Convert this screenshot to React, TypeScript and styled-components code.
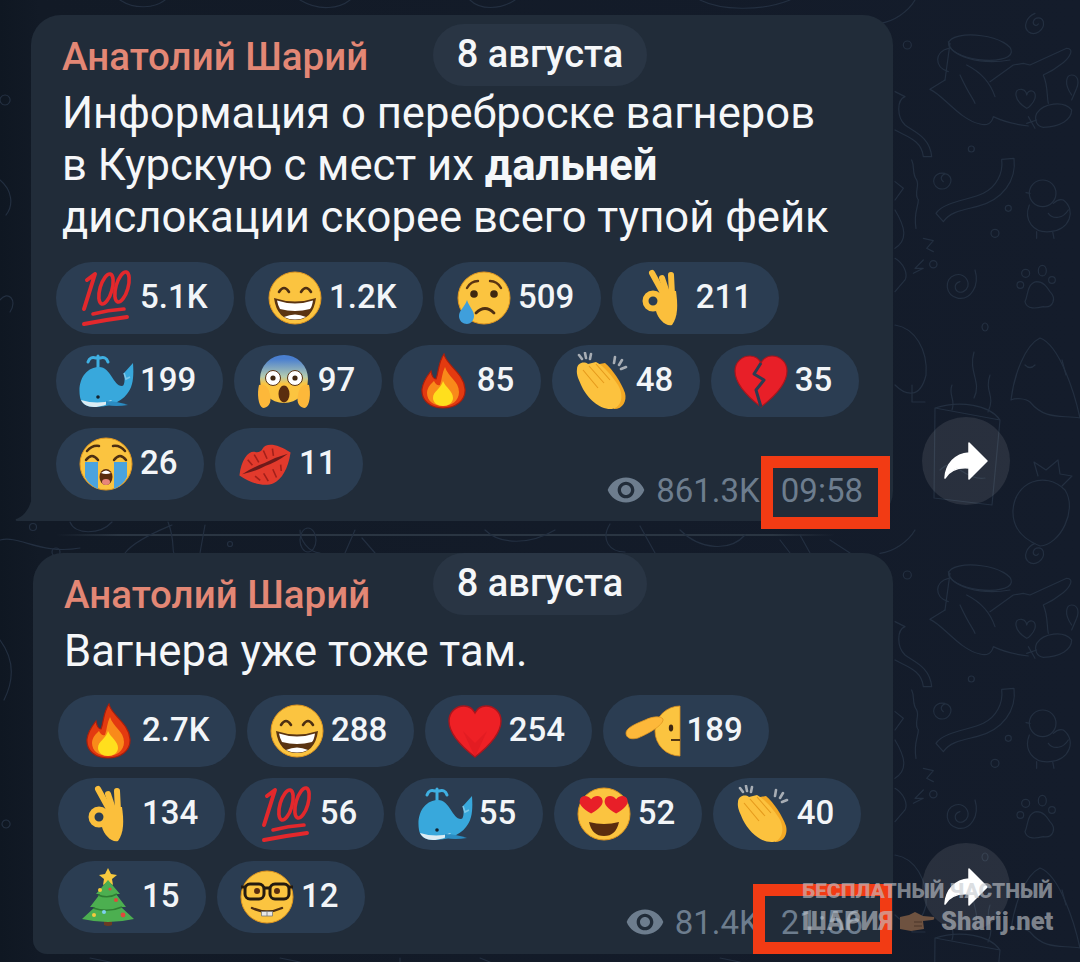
import * as React from 'react'
import styled, { createGlobalStyle } from 'styled-components'

const GlobalStyle = createGlobalStyle`
  html, body {
    margin: 0;
    padding: 0;
    background: #141c2a;
  }
  body {
    font-family: Roboto, "Liberation Sans", sans-serif;
  }
`

const Page = styled.div`
  position: relative;
  width: 1080px;
  height: 962px;
  overflow: hidden;
  padding-top: 15px;
  box-sizing: border-box;
  background: linear-gradient(90deg, #0f1722 0, #121a26 40px, #141c2b 100%);
`
const Doodles = styled.svg`
  position: absolute;
  left: 0;
  top: 0;
  fill: none;
  stroke: #232f40;
  stroke-width: 1.2;
  stroke-linecap: round;
  stroke-linejoin: round;
`
const MessageRow = styled.div<{ $left: number }>`
  position: relative;
  display: flex;
  align-items: flex-end;
  padding-left: ${p => p.$left}px;
`
const Bubble = styled.div<{ $width: number; $tail?: boolean }>`
  position: relative;
  box-sizing: border-box;
  width: ${p => p.$width}px;
  padding: 20px 25px 21px 25px;
  background: #212c39;
  border-radius: 30px 30px 30px ${p => (p.$tail ? '0' : '14px')};
`
const Tail = styled.svg`
  position: absolute;
  left: -16px;
  bottom: 0;
  fill: #212c39;
`
const Name = styled.div`
  margin-left: 6px;
  font-size: 38.5px;
  line-height: 44px;
  font-weight: 500;
  color: #e38775;
`
const MessageText = styled.div`
  margin: 9px 0 0 6px;
  font-size: 43.6px;
  line-height: 52px;
  color: #f5f7f9;
  white-space: nowrap;
  b {
    font-weight: 700;
  }
`
const DatePill = styled.div<{ $left: number; $top: number }>`
  position: absolute;
  left: ${p => p.$left}px;
  top: ${p => p.$top}px;
  width: 214px;
  height: 62px;
  padding-bottom: 2px;
  box-sizing: border-box;
  border-radius: 31px;
  background: #293544;
  display: flex;
  align-items: center;
  justify-content: center;
  font-size: 38px;
  font-weight: 500;
  color: #f5f7f9;
`
const Reactions = styled.div<{ $top: number }>`
  display: flex;
  flex-wrap: wrap;
  gap: 11px;
  max-width: 808px;
  margin-top: ${p => p.$top}px;
`
const ReactionPill = styled.div`
  display: flex;
  align-items: center;
  height: 72px;
  padding: 0 26.5px 0 22px;
  border-radius: 36px;
  background: #2b3d52;
  font-size: 33px;
  font-weight: 500;
  color: #f2f5f8;
  svg {
    margin-right: 6px;
    flex: none;
  }
`
const Count = styled.span`
  margin-bottom: 4px;
`
const Meta = styled.div<{ $bottom: number }>`
  position: absolute;
  right: 30px;
  bottom: ${p => p.$bottom}px;
  display: flex;
  align-items: center;
  height: 40px;
  font-size: 33px;
  color: #6d7d8e;
`
const Views = styled.span`
  display: flex;
  align-items: center;
  gap: 10px;
  margin-right: 21px;
  svg {
    fill: #6d7d8e;
  }
`
const Highlight = styled.div<{ $left: number; $top: number; $w: number; $h: number }>`
  position: absolute;
  left: ${p => p.$left}px;
  top: ${p => p.$top}px;
  width: ${p => p.$w}px;
  height: ${p => p.$h}px;
  box-sizing: border-box;
  border: 12px solid #f23b14;
`
const ShareButton = styled.div<{ $gap: number; $bottom: number }>`
  width: 88px;
  height: 88px;
  margin-left: ${p => p.$gap}px;
  margin-bottom: ${p => p.$bottom}px;
  border-radius: 50%;
  background: rgba(255, 255, 255, 0.09);
  display: flex;
  align-items: center;
  justify-content: center;
`
const Divider = styled.div`
  height: 2px;
  margin: 13px 245px 17px 56px;
  background: linear-gradient(90deg, transparent, #2a3542 8%, #2a3542 92%, transparent);
`
const Watermark = styled.div`
  position: absolute;
  left: 802px;
  top: 878px;
  width: 270px;
  font-weight: 900;
  color: rgba(196, 200, 206, 0.6);
  white-space: nowrap;
`
const WatermarkTop = styled.div`
  font-size: 21px;
  line-height: 27px;
`
const WatermarkBottom = styled.div`
  display: flex;
  align-items: center;
  gap: 6px;
  font-size: 25.5px;
  line-height: 32px;
`

const Hundred = () => (
  <svg width="56" height="58" viewBox="0 0 56 58" fill="none" stroke="#e3282c" strokeLinecap="round">
    <path d="M6 40 L17 5 L9 11" strokeWidth="4" strokeLinejoin="round" />
    <ellipse cx="28" cy="20" rx="6" ry="15.5" transform="rotate(16 28 20)" strokeWidth="3.6" />
    <ellipse cx="44" cy="18" rx="6" ry="15.5" transform="rotate(16 44 18)" strokeWidth="3.6" />
    <path d="M15 45 Q30 41 46 40" strokeWidth="3.6" />
    <path d="M6 55 Q26 51 49 48" strokeWidth="4" />
  </svg>
)

const Face = () => <circle cx="28" cy="28" r="26" fill="#fbc440" stroke="#e0961f" strokeWidth="1" />

const Grin = () => (
  <svg width="56" height="56" viewBox="0 0 56 56">
    <Face />
    <path d="M12 22 q5 -8 10 0 M34 22 q5 -8 10 0" fill="none" stroke="#4d2f12" strokeWidth="2.6" strokeLinecap="round" />
    <path d="M7 28 Q28 35 49 28 Q46 50 28 50 Q10 50 7 28Z" fill="#5a3412" />
    <path d="M10 30.5 Q28 36.5 46 30.5 Q45 37 43 39 Q28 43 13 39 Q11 36 10 30.5Z" fill="#fff" />
    <path d="M17 47 Q28 42 39 47 Q34 49.5 28 49.5 Q22 49.5 17 47Z" fill="#fff" />
  </svg>
)

const SadTear = () => (
  <svg width="56" height="56" viewBox="0 0 56 56">
    <Face />
    <path d="M11 18 Q15 11 22 11 M34 11 Q41 11 45 18" fill="none" stroke="#5a3412" strokeWidth="2.4" strokeLinecap="round" />
    <circle cx="18" cy="24" r="3.8" fill="#3f2710" />
    <circle cx="38" cy="24" r="3.8" fill="#3f2710" />
    <path d="M20 43 Q29 34 38 43" fill="none" stroke="#4d2f12" strokeWidth="2.8" strokeLinecap="round" />
    <path d="M11 30 C13 37 18 40 18 46 C18 51 14 54 11 54 C7 54 3 51 3 46 C3 40 9 37 11 30Z" fill="#3f9fdc" />
  </svg>
)

const OkHand = () => (
  <svg width="56" height="58" viewBox="0 0 56 58">
    <g fill="none" stroke="#fbbf3c" strokeLinecap="round">
      <circle cx="19" cy="32" r="7.5" strokeWidth="6" />
      <path d="M18 4 L29 24" strokeWidth="6" />
      <path d="M28 9 L33 24" strokeWidth="6" />
      <path d="M37 6 L38 26" strokeWidth="6" />
    </g>
    <path d="M26 22 L42 22 C44 36 44 48 38 56 C32 58 24 50 22 42Z" fill="#fbbf3c" />
    <circle cx="19" cy="32" r="3.6" fill="#2b3d52" />
  </svg>
)

const Whale = () => (
  <svg width="56" height="56" viewBox="0 0 56 56">
    <path d="M20 3 L20 14 M10 9 Q12 3 18 5 M22 5 Q28 3 30 9" fill="none" stroke="#3fb0e2" strokeWidth="3" strokeLinecap="round" />
    <path d="M2 44 C-1 26 9 14 21 14 C33 14 35 33 44 33 C47 33 47 24 46 20 L55 10 C56 24 55 34 49 41 C42 50 30 54 16 54 C8 54 3 50 2 44Z" fill="#38a8dc" />
    <path d="M3 47 Q20 52 34 47 C30 52 22 54 16 54 C9 54 5 51 3 47Z" fill="#dcecf3" />
    <path d="M28 48 Q38 48 50 52 Q38 54 28 52Z" fill="#2b8cc2" />
    <circle cx="20" cy="44" r="1.8" fill="#14222e" />
    <path d="M46 20 L48 26 L52 24" fill="none" stroke="#7cc9ea" strokeWidth="1.6" />
  </svg>
)

const Scream = () => (
  <svg width="56" height="56" viewBox="0 0 56 56">
    <defs>
      <linearGradient id="screamFace" x1="0" y1="0" x2="0" y2="1">
        <stop offset="0.08" stopColor="#4a7fd0" />
        <stop offset="0.45" stopColor="#b3cbb0" />
        <stop offset="0.6" stopColor="#fbc440" />
      </linearGradient>
    </defs>
    <circle cx="28" cy="26" r="24" fill="url(#screamFace)" />
    <circle cx="17" cy="25" r="7.5" fill="#fff" stroke="#5a3412" strokeWidth="1" />
    <circle cx="39" cy="25" r="7.5" fill="#fff" stroke="#5a3412" strokeWidth="1" />
    <circle cx="17" cy="25" r="2.6" fill="#3f2710" />
    <circle cx="39" cy="25" r="2.6" fill="#3f2710" />
    <ellipse cx="28" cy="41" rx="5.5" ry="8.5" fill="#5a2d0f" />
    <path d="M3 32 C8 30 13 34 14 42 C16 50 12 55 7 55 C2 53 1 40 3 32Z" fill="#fdb83a" />
    <path d="M53 32 C48 30 43 34 42 42 C40 50 44 55 49 55 C54 53 55 40 53 32Z" fill="#fdb83a" />
  </svg>
)

const Fire = () => (
  <svg width="56" height="56" viewBox="0 0 56 56">
    <path d="M29 1 C31 12 49 20 50 36 C51 48 40 55 28 55 C16 55 6 48 7 36 C8 28 13 22 16 18 C17 24 19 26 21 26 C24 18 23 10 29 1Z" fill="#e33a10" stroke="#a81e0c" strokeWidth="1.2" />
    <path d="M30 14 C33 24 44 28 44 39 C44 48 36 53 28 53 C19 53 12 48 12 40 C12 34 17 30 19 28 C21 32 23 33 25 32 C27 26 27 20 30 14Z" fill="#f98a1a" />
    <path d="M28 28 C31 35 38 38 38 45 C38 50 33 53 28 53 C23 53 18 50 18 45 C18 38 26 36 28 28Z" fill="#ffdf1d" />
  </svg>
)

const Clap = () => (
  <svg width="56" height="58" viewBox="0 0 56 58">
    <path d="M11 1 L12 6 M5 3 L8 7 M17 2 L16 7 M41 5 L40 11 M48 8 L45 13 M52 15 L47 17" stroke="#a7adb4" strokeWidth="2.6" strokeLinecap="round" />
    <path d="M20 13 L31 11 C39 18 47 30 51 41 C53 49 49 57 40 57Z" fill="#f3a925" />
    <path d="M3 17 C3 11 10 9 14 12 L22 10 C30 14 38 24 44 33 C50 43 48 55 38 57 C26 58 14 47 8 35 C5 28 2 23 3 17Z" fill="#fcc23e" />
    <path d="M9 18 L24 36 M15 14 L30 31 M22 12 L36 28" stroke="#e59a1c" strokeWidth="1.1" fill="none" />
  </svg>
)

const heartPath = 'M28 54 C10 40 2 29 2 18 C2 9 9 3 17 3 C22 3 26 6 28 10 C30 6 34 3 39 3 C47 3 54 9 54 18 C54 29 46 40 28 54Z'

const BrokenHeart = () => (
  <svg width="56" height="56" viewBox="0 0 56 56">
    <path d={heartPath} fill="#e81f28" stroke="#a8161d" strokeWidth="1.2" />
    <path d="M28 10 L21 21 L31 27 L23 37 L28 54" fill="none" stroke="#2b3d52" strokeWidth="3" strokeLinejoin="round" />
  </svg>
)

const Heart = () => (
  <svg width="56" height="56" viewBox="0 0 56 56">
    <path d={heartPath} fill="#ee2025" stroke="#a8161d" strokeWidth="1.4" />
    <path d="M28 40 L40 28 L28 54 L16 28Z" fill="#d8181f" opacity="0.5" />
  </svg>
)

const LoudCry = () => (
  <svg width="56" height="56" viewBox="0 0 56 56">
    <Face />
    <path d="M7 26 L20 26 L20 53 Q11 49 7 41Z M36 26 L49 26 L49 41 Q45 49 36 53Z" fill="#4aa3df" />
    <path d="M8 24 q6 -8 12 0 M36 24 q6 -8 12 0 M9 15 Q14 9 21 10 M35 10 Q42 9 47 15" fill="none" stroke="#4d2f12" strokeWidth="2.5" strokeLinecap="round" />
    <ellipse cx="28" cy="41" rx="6.5" ry="8" fill="#5a2d0f" />
    <path d="M23 37 Q28 32 33 37 Q28 39 23 37Z" fill="#fff" />
    <ellipse cx="28" cy="46" rx="4" ry="3" fill="#e8857a" />
  </svg>
)

const Lips = () => (
  <svg width="56" height="56" viewBox="0 0 56 56">
    <g transform="rotate(-24 28 28)">
      <path d="M0 28 C9 13 19 9 24 13 C26 15 30 15 32 13 C37 9 47 13 56 28 C47 42 37 49 28 49 C19 49 9 42 0 28Z" fill="#e23a2c" />
      <path d="M3 28 Q16 26 28 27 Q40 26 53 28 Q40 31 28 30 Q16 31 3 28Z" fill="#6d1a1a" />
      <path d="M14 17 L16 24 M22 15 L23 24 M32 15 L32 24 M41 17 L39 24 M14 35 L17 41 M23 36 L24 45 M33 36 L33 45 M42 35 L40 41" stroke="#a3201a" strokeWidth="1.6" />
    </g>
  </svg>
)

const Salute = () => (
  <svg width="56" height="56" viewBox="0 0 56 56">
    <path d="M55 3 A25 25 0 0 0 55 53Z" fill="#fbc440" stroke="#d98e1f" strokeWidth="0.8" />
    <ellipse cx="46" cy="25" rx="2.2" ry="3.4" fill="#3f2710" />
    <path d="M46 37 H55" stroke="#3f2710" strokeWidth="1.8" />
    <path d="M1 30 C1 25 10 21 20 17 C28 13 36 13 38 16 C39 21 27 29 13 35 C6 37 1 35 1 30Z" fill="#fdb83a" stroke="#e0961f" strokeWidth="0.8" />
  </svg>
)

const Tree = () => (
  <svg width="56" height="60" viewBox="0 0 56 60">
    <path d="M28 1 L31 7 L37 8 L32 12 L33 18 L28 15 L23 18 L24 12 L19 8 L25 7Z" fill="#f7c93e" />
    <path d="M24 52 H32 V58 Q28 60 24 58Z" fill="#6b3b22" />
    <path d="M28 13 L40 27 L36 27 L46 40 L41 40 L54 52 Q28 58 2 52 L15 40 L10 40 L20 27 L16 27Z" fill="#4caf50" />
    <path d="M18 28 Q28 32 37 27 M13 41 Q28 46 42 40" fill="none" stroke="#2e7d32" strokeWidth="1.6" />
    <circle cx="20" cy="23" r="2" fill="#f7c93e" />
    <circle cx="36" cy="33" r="2" fill="#e0483c" />
    <circle cx="14" cy="48" r="2" fill="#f7c93e" />
    <circle cx="24" cy="45" r="2" fill="#7fd0f0" />
    <circle cx="43" cy="48" r="2.4" fill="#e0483c" />
    <circle cx="30" cy="22" r="1.6" fill="#e0483c" />
  </svg>
)

const Nerd = () => (
  <svg width="56" height="56" viewBox="0 0 56 56">
    <Face />
    <circle cx="18" cy="22" r="3" fill="#5a2d0f" />
    <circle cx="38" cy="22" r="3" fill="#5a2d0f" />
    <g fill="none" stroke="#241a10" strokeWidth="3">
      <rect x="6" y="15" width="19" height="15" rx="5" />
      <rect x="31" y="15" width="19" height="15" rx="5" />
      <path d="M25 19 H31 M2 18 H6 M50 18 H54" />
    </g>
    <path d="M13 39 Q28 46 43 39" fill="none" stroke="#4d2f12" strokeWidth="2.4" strokeLinecap="round" />
    <path d="M22.5 42.5 H33.5 V47 H22.5Z" fill="#e8e8e8" stroke="#777" strokeWidth="0.8" />
    <path d="M28 42.5 V47" stroke="#777" strokeWidth="0.8" />
  </svg>
)

const HeartEyes = () => (
  <svg width="56" height="56" viewBox="0 0 56 56">
    <Face />
    <path d="M17 31 C8 26 4 21 5 17 C6 12 13 11 17 16 C21 11 28 12 29 17 C30 21 26 26 17 31Z" fill="#e81f28" transform="translate(-1 -2) scale(0.95)" />
    <path d="M17 31 C8 26 4 21 5 17 C6 12 13 11 17 16 C21 11 28 12 29 17 C30 21 26 26 17 31Z" fill="#e81f28" transform="translate(24 -2) scale(0.95)" />
    <path d="M13 36 Q28 40 43 36 Q40 50 28 50 Q16 50 13 36Z" fill="#5a2d0f" />
  </svg>
)

const Eye = () => (
  <svg width="40" height="40" viewBox="0 0 24 24">
    <path d="M12 4.5C7 4.5 2.73 7.61 1 12c1.73 4.39 6 7.5 11 7.5s9.27-3.11 11-7.5c-1.73-4.39-6-7.5-11-7.5zM12 17c-2.76 0-5-2.24-5-5s2.24-5 5-5 5 2.24 5 5-2.24 5-5 5zm0-8c-1.66 0-3 1.34-3 3s1.34 3 3 3 3-1.34 3-3-1.34-3-3-3z" />
  </svg>
)

const ShareArrow = () => (
  <svg width="46" height="40" viewBox="0 0 46 40">
    <path d="M26 2 L44 20 L26 38 L26 27 C15 26 7 29 2 37 C3 23 12 13 26 12Z" fill="#fff" stroke="#fff" strokeWidth="1.5" strokeLinejoin="round" />
  </svg>
)

const PointingHand = () => (
  <svg width="36" height="24" viewBox="0 0 36 24">
    <path d="M1 8 L10 6 L16 3 L24 7 L35 8 Q36 11 33 11 L24 12 L25 20 L12 22 L1 20Z" fill="#6e5240" />
    <path d="M15 13 L23 13 M15 17 L23 17" stroke="#4a3528" strokeWidth="1" />
  </svg>
)

const TileDoodles = () => (
  <>
    <g transform="translate(880 0) scale(0.3333)" strokeWidth="3.6">
      <path d="M465 40 C440 50 428 80 445 95 C465 110 495 90 490 65 C485 50 465 50 460 65 C458 75 470 80 475 72" />
      <ellipse cx="300" cy="143" rx="95" ry="36" transform="rotate(8 300 143)" />
      <path d="M205 125 C210 170 300 195 390 180 M205 145 C165 155 160 200 205 215 M210 130 L195 240" />
      <path d="M195 240 L150 268 C190 285 240 360 300 372 C320 378 335 372 340 350 C370 365 420 375 445 378" />
      <path d="M330 245 L400 195 L430 190 L450 195 L560 145 C585 145 570 175 540 195 C515 215 500 220 490 225 C505 260 500 290 505 310" />
      <path d="M240 225 C270 290 280 295 285 310 M260 195 C310 220 335 260 345 290" />
      <path d="M470 340 C490 310 550 300 575 330 C575 360 540 380 490 382 C470 380 462 360 470 340Z" />
      <path d="M440 325 C400 300 400 265 425 268 C440 270 440 285 440 285 C445 265 470 270 465 295 C460 310 445 325 440 325Z" />
      <path d="M575 285 C550 250 560 225 575 225 C590 225 600 240 590 265 L575 300 M445 350 L465 385 M440 370 L470 360" />
      <path d="M45 275 L75 290 C50 300 50 350 75 375 C100 395 150 410 155 470 L130 470 C125 420 80 410 45 390" />
      <path d="M95 480 C105 500 95 520 110 540 C120 560 100 580 115 600 C115 620 100 640 108 685" />
      <path d="M195 520 C160 515 150 550 175 565 C205 575 225 540 205 525 C190 515 175 535 190 545" />
      <path d="M365 478 L402 475 C410 540 370 600 290 620 C250 630 210 635 190 665 L168 640 C190 605 270 600 310 580 C350 560 370 520 365 478Z" />
      <circle cx="82" cy="135" r="12" />
      <circle cx="274" cy="447" r="9" />
      <circle cx="385" cy="625" r="9" />
      <circle cx="345" cy="700" r="12" />
      <circle cx="160" cy="793" r="11" />
      <circle cx="488" cy="580" r="40" />
      <path d="M448 615 C430 660 460 700 510 695 C570 690 590 630 550 600 C535 595 525 605 520 610 M470 695 L470 715 M518 695 L522 715 M505 640 C520 660 550 655 565 630 M438 578 L450 580" />
      <path d="M130 715 L160 722 L140 745 L160 755 M130 780 L105 805 L130 805 L100 820" />
      <path d="M285 810 C300 860 270 900 235 895 C195 890 190 835 225 825 C260 815 280 860 250 875 C225 885 215 850 240 845" />
      <circle cx="437" cy="820" r="12" />
      <ellipse cx="487" cy="812" rx="12" ry="16" />
      <circle cx="516" cy="840" r="10" />
      <circle cx="421" cy="855" r="10" />
      <path d="M470 845 C440 850 445 885 435 905 C440 930 470 925 490 920 C520 925 530 895 510 875 C500 860 490 845 470 845Z" />
      <path d="M45 545 L70 565 L45 600 M45 630 C75 680 85 720 45 745 M45 775 C70 790 85 820 75 840 L45 875 M0 70 C40 65 85 35 105 0" />
    </g>
    <g strokeWidth="1.2">
      <path d="M1011 400 C1014 375 1025 345 1040 338 C1060 345 1075 395 1080 418 C1060 415 1045 420 1030 402 C1025 398 1015 398 1011 400Z" />
      <path d="M1025 365 Q1030 370 1035 365 M1062 360 L1066 375" />
      <path d="M895 325 C915 328 928 350 926 375 C920 400 905 395 895 385 M912 385 L912 402 L925 402" />
      <path d="M985 323 a3 4 0 1 0 .1 0 M974 352 C968 372 982 382 974 398 M990 375 C984 392 996 395 988 412 M952 385 C948 395 956 400 952 410" />
      <path d="M935 408 L1000 420 L992 505 L934 498Z M935 408 C960 400 990 405 1000 420" />
      <path d="M1013 510 C1015 482 1045 470 1065 490 C1078 510 1060 545 1040 546 C1025 540 1012 530 1013 510Z" />
      <path d="M1038 476 L1034 462 L1046 470 L1058 460 L1060 474 L1072 476 L1062 486" />
      <path d="M940 470 Q950 460 960 470 Q975 480 985 478" />
    </g>
  </>
)

// doodles along the left edge and in the strip between the two messages
const StripDoodles = () => (
  <g strokeWidth="1.2">
    <circle cx="33" cy="527" r="3.5" />
    <circle cx="56" cy="552" r="4" />
    <circle cx="230" cy="544" r="2.5" />
    <path d="M0 540 C20 535 40 555 80 548 M70 522 C75 535 100 535 112 522 M125 553 C135 540 160 530 172 525" />
    <path d="M168 522 C175 540 172 552 174 553 M205 525 L200 553 M300 530 C300 540 308 552 320 553 M355 530 L345 553 M362 538 L375 553" />
    <ellipse cx="308" cy="540" rx="8" ry="12" />
    <path d="M485 530 C500 545 530 545 555 530 M610 524 C600 540 610 552 625 552 M640 526 L655 553 M680 530 C700 550 730 552 745 535 M780 540 L790 553 M800 535 L810 553 M830 540 L850 553" />
    <path d="M0 300 C8 290 18 300 10 312 M0 180 C12 190 14 205 6 215 M0 640 C15 660 14 680 4 700 M5 95 a5 5 0 1 0 .1 0 M6 820 a4 4 0 1 0 .1 0" />
    <path d="M120 0 C135 10 155 8 165 0 M300 0 C320 12 340 8 350 0 M470 0 C480 10 500 10 515 0 M700 0 C720 10 760 12 790 0" />
    <path d="M90 958 L110 962 M280 958 L300 962 M400 958 L400 962 M480 958 L490 962 M720 958 L740 962" />
  </g>
)

const firstReactions: [React.FC, string][] = [
  [Hundred, '5.1K'],
  [Grin, '1.2K'],
  [SadTear, '509'],
  [OkHand, '211'],
  [Whale, '199'],
  [Scream, '97'],
  [Fire, '85'],
  [Clap, '48'],
  [BrokenHeart, '35'],
  [LoudCry, '26'],
  [Lips, '11'],
]

const secondReactions: [React.FC, string][] = [
  [Fire, '2.7K'],
  [Grin, '288'],
  [Heart, '254'],
  [Salute, '189'],
  [OkHand, '134'],
  [Hundred, '56'],
  [Whale, '55'],
  [HeartEyes, '52'],
  [Clap, '40'],
  [Tree, '15'],
  [Nerd, '12'],
]

function ReactionList({ items, top }: { items: [React.FC, string][]; top: number }) {
  return (
    <Reactions $top={top}>
      {items.map(([Icon, count]) => (
        <ReactionPill key={count}>
          <Icon />
          <Count>{count}</Count>
        </ReactionPill>
      ))}
    </Reactions>
  )
}

export default function App() {
  return (
    <Page>
      <GlobalStyle />
      <Doodles width="1080" height="962" viewBox="0 0 1080 962">
        <TileDoodles />
        <g transform="translate(0 530)">
          <TileDoodles />
        </g>
        <StripDoodles />
      </Doodles>

      <MessageRow $left={31}>
        <Bubble $width={862} $tail>
          <Tail width="17" height="24" viewBox="0 0 17 24">
            <path d="M17 0 V24 H2 Q0 24 1 22 C8 20 15 12 17 0Z" />
          </Tail>
          <Name>Анатолий Шарий</Name>
          <DatePill $left={402} $top={9}>8 августа</DatePill>
          <MessageText>
            Информация о переброске вагнеров
            <br />
            в Курскую с мест их <b>дальней</b>
            <br />
            дислокации скорее всего тупой фейк
          </MessageText>
          <ReactionList items={firstReactions} top={18} />
          <Meta $bottom={11}>
            <Views>
              <Eye />
              861.3K
            </Views>
            09:58
          </Meta>
          <Highlight $left={730} $top={441} $w={129} $h={73} />
        </Bubble>
        <ShareButton $gap={29} $bottom={16}>
          <ShareArrow />
        </ShareButton>
      </MessageRow>

      <Divider />

      <MessageRow $left={33}>
        <Bubble $width={860}>
          <Name>Анатолий Шарий</Name>
          <DatePill $left={400} $top={0}>8 августа</DatePill>
          <MessageText>Вагнера уже тоже там.</MessageText>
          <ReactionList items={secondReactions} top={17} />
          <Meta $bottom={12}>
            <Views>
              <Eye />
              81.4K
            </Views>
            21:56
          </Meta>
          <Highlight $left={720} $top={331} $w={139} $h={70} />
        </Bubble>
        <ShareButton $gap={29} $bottom={23}>
          <ShareArrow />
        </ShareButton>
      </MessageRow>

      <Watermark>
        <WatermarkTop>БЕСПЛАТНЫЙ ЧАСТНЫЙ</WatermarkTop>
        <WatermarkBottom>
          ШАРИЯ
          <PointingHand />
          Sharij.net
        </WatermarkBottom>
      </Watermark>
    </Page>
  )
}
